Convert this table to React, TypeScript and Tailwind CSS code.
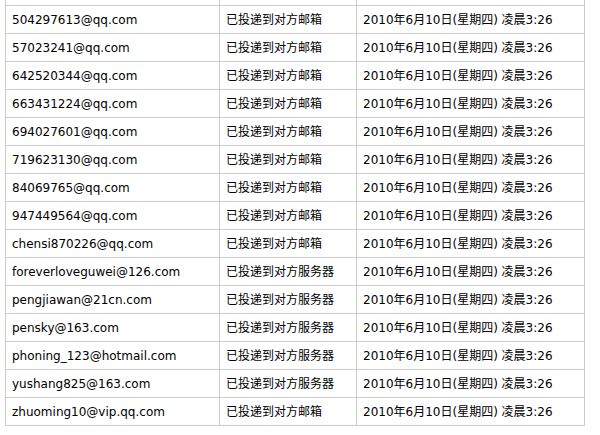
const MAILBOX = '已投递到对方邮箱';
const SERVER = '已投递到对方服务器';
const SENT_AT = '2010年6月10日(星期四) 凌晨3:26';

const rows: [string, string][] = [
  ['504297613@qq.com', MAILBOX],
  ['57023241@qq.com', MAILBOX],
  ['642520344@qq.com', MAILBOX],
  ['663431224@qq.com', MAILBOX],
  ['694027601@qq.com', MAILBOX],
  ['719623130@qq.com', MAILBOX],
  ['84069765@qq.com', MAILBOX],
  ['947449564@qq.com', MAILBOX],
  ['chensi870226@qq.com', MAILBOX],
  ['foreverloveguwei@126.com', SERVER],
  ['pengjiawan@21cn.com', SERVER],
  ['pensky@163.com', SERVER],
  ['phoning_123@hotmail.com', SERVER],
  ['yushang825@163.com', SERVER],
  ['zhuoming10@vip.qq.com', MAILBOX],
];

function Row({ email, status, time, partial }: { email: string; status: string; time: string; partial?: boolean }) {
  return (
    <div className={`flex border-b border-[#cccccc] ${partial ? 'h-[6px]' : 'h-[28px]'}`}>
      <div className="w-[214px] shrink-0 border-r border-[#cccccc] flex items-center pl-[6px]">{email}</div>
      <div className="w-[137px] shrink-0 border-r border-[#cccccc] flex items-center pl-[6px]">{status}</div>
      <div className="flex-1 flex items-center pl-[6px]">{time}</div>
    </div>
  );
}

export default function App() {
  return (
    <div className="w-[600px] h-[435px] bg-white overflow-hidden">
      <div
        className="ml-[5px] w-[580px] border-l border-r border-[#cccccc] text-[12px] text-black leading-none whitespace-nowrap"
        style={{ fontFamily: '"DejaVu Sans", Verdana, "Noto Sans CJK SC", sans-serif' }}
      >
        <Row email="" status="" time="" partial />
        {rows.map(([email, status]) => (
          <Row key={email} email={email} status={status} time={SENT_AT} />
        ))}
      </div>
    </div>
  );
}
